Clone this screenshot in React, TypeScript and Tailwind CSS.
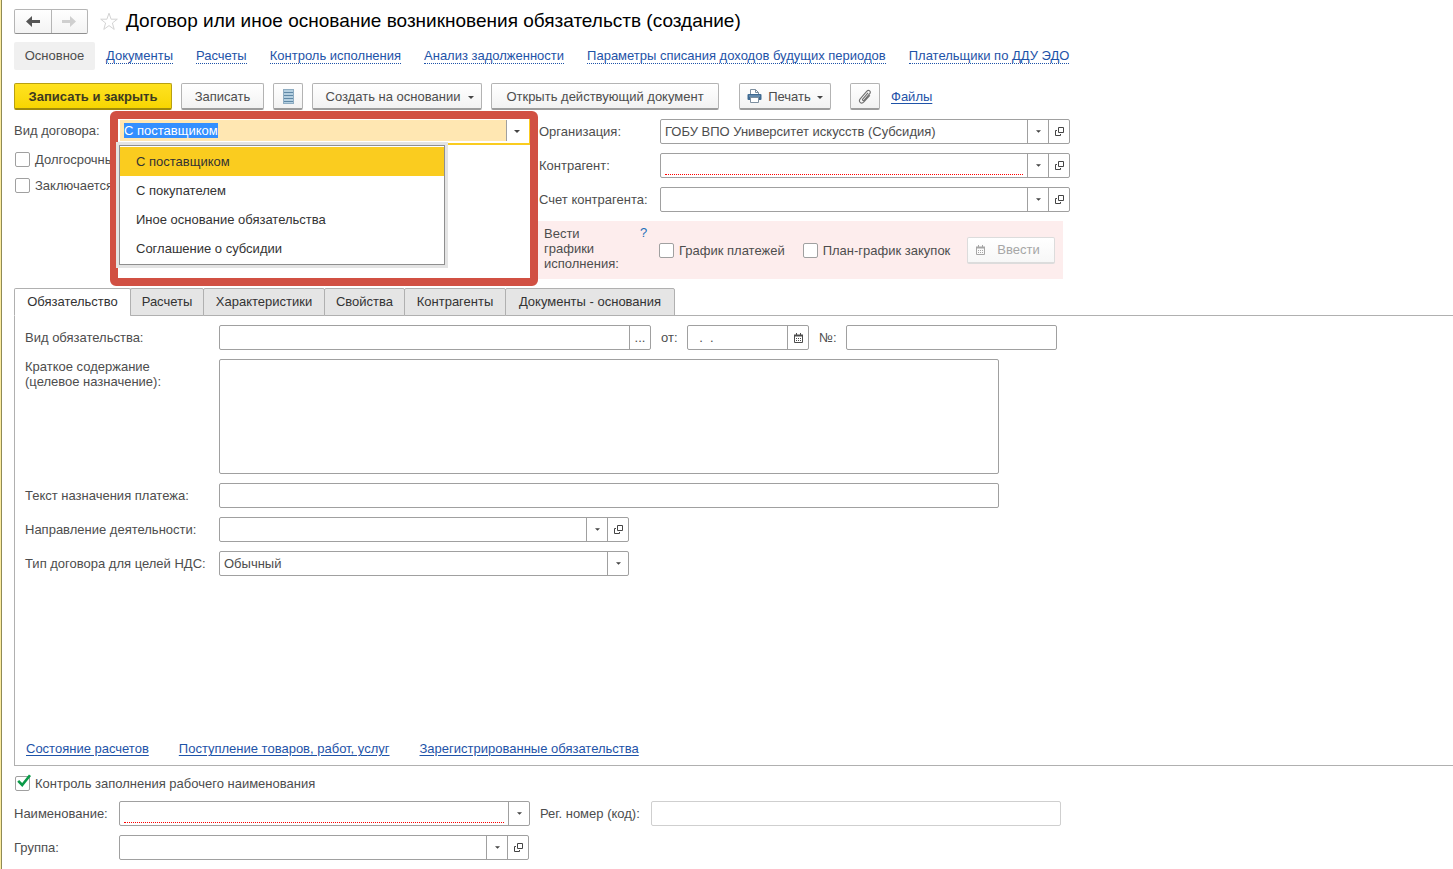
import { useEffect, useRef, useState, type ReactNode } from "react";
import clsx from "clsx";

const sections = ["Документы", "Расчеты", "Контроль исполнения", "Анализ задолженности", "Параметры списания доходов будущих периодов", "Плательщики по ДДУ ЭДО"];
const kinds = ["С поставщиком", "С покупателем", "Иное основание обязательства", "Соглашение о субсидии"];
const tabs = [
  { name: "Обязательство", width: "w-[117px]" },
  { name: "Расчеты", width: "w-[74px]" },
  { name: "Характеристики", width: "w-[122px]" },
  { name: "Свойства", width: "w-[81px]" },
  { name: "Контрагенты", width: "w-[102px]" },
  { name: "Документы - основания", width: "w-[170px]" },
];
const reports = ["Состояние расчетов", "Поступление товаров, работ, услуг", "Зарегистрированные обязательства"];

export default function App() {
  return (
    <div className="flex min-h-screen flex-col border-l border-[#fbeb9e] bg-white font-['Liberation_Sans',Arial,sans-serif] text-[13px] leading-[15px] text-[#4d4d4d]">
      <div className="flex flex-1 flex-col border-l border-[#8f8a55] py-[9px] pl-3">
        <Header />
        <SectionNav />
        <Toolbar />
        <MainFields />
        <Tabs />
        <Footer />
      </div>
    </div>
  );
}

function Header() {
  return (
    <header className="flex h-6 items-center">
      <div className="flex h-[25px] w-[74px] shrink-0 rounded-xs border border-[#b5b5b5] border-b-[#8f8f8f] bg-linear-to-b from-white to-[#f3f3f3]">
        <button type="button" aria-label="Назад" className="flex flex-1 items-center justify-center border-r border-[#b5b5b5]">
          <ArrowIcon className="text-[#555]" />
        </button>
        <button type="button" aria-label="Вперед" disabled className="flex flex-1 items-center justify-center">
          <ArrowIcon className="rotate-180 text-[#cfcfcf]" />
        </button>
      </div>
      <button type="button" aria-label="В избранное" className="ml-3">
        <svg width="18" height="19" viewBox="0 0 18 19" fill="none" stroke="#d3d3d3">
          <path d="M9 1.2 11.1 7.2H17.3L12.4 11 14.2 17.4 9 13.6 3.8 17.4 5.6 11 .7 7.2H6.9Z" />
        </svg>
      </button>
      <h1 className="ml-2 text-[19px] leading-6 text-black">Договор или иное основание возникновения обязательств (создание)</h1>
    </header>
  );
}

function SectionNav() {
  return (
    <nav className="mt-[9px] flex h-7 items-center gap-[23px]">
      <a href="#main" className="-mr-3 flex h-7 w-[81px] items-center justify-center rounded-xs bg-[#f0f0f0] pb-px">Основное</a>
      {sections.map(s => (
        <a key={s} href="#section" className="border-b border-dotted border-[#1e53a8] text-[#1e53a8]">{s}</a>
      ))}
    </nav>
  );
}

const buttonBase = "flex h-[27px] items-center justify-center rounded-xs border border-[#b3b3b3] border-b-2 border-b-[#9c9c9c] bg-linear-to-b from-white to-[#f2f2f2]";

function Toolbar() {
  return (
    <div className="mt-[13px] flex items-center gap-[9px]">
      <button type="button" className="flex h-[27px] w-[158px] items-center justify-center rounded-xs border border-b-2 border-[#b8a012] border-b-[#a08b0c] bg-linear-to-b from-[#ffe21f] to-[#f7d600] font-bold text-[#3d3a20]">Записать и закрыть</button>
      <button type="button" className={clsx(buttonBase, "w-[83px]")}>Записать</button>
      <button type="button" aria-label="Список" className={clsx(buttonBase, "w-[30px]")}><ListIcon /></button>
      <button type="button" className={clsx(buttonBase, "w-[170px] gap-2 pl-1.5")}>Создать на основании<Caret /></button>
      <button type="button" className={clsx(buttonBase, "w-[228px]")}>Открыть действующий документ</button>
      <button type="button" className={clsx(buttonBase, "ml-[11px] w-[92px] gap-1.5")}><PrinterIcon />Печать<Caret /></button>
      <button type="button" aria-label="Присоединенные файлы" className={clsx(buttonBase, "ml-2.5 w-[30px]")}><ClipIcon /></button>
      <a href="#files" className="ml-0.5 text-[#1e53a8] underline underline-offset-2">Файлы</a>
    </div>
  );
}

function MainFields() {
  return (
    <div className="mt-[9px] flex">
      <div className="relative w-[525px] shrink-0">
        {/* callout around the drop-down */}
        <div className="absolute -top-2 left-24 z-10 h-[175px] w-[428px] rounded-md border-8 border-[#d15043] bg-white" />
        <KindCombo />
        <div className="mt-2 flex flex-col gap-[11px]">
          <Check label="Долгосрочный" />
          <Check label="Заключается" />
        </div>
      </div>
      <div className="w-[531px]">
        <div className="flex flex-col gap-[9px]">
          <Row id="org" label="Организация:" labelClass="w-[121px]">
            <SelectField id="org" value="ГОБУ ВПО Университет искусств (Субсидия)" open className="w-[410px]" />
          </Row>
          <Row id="partner" label="Контрагент:" labelClass="w-[121px]">
            <SelectField id="partner" required open className="w-[410px]" />
          </Row>
          <Row id="account" label="Счет контрагента:" labelClass="w-[121px]">
            <SelectField id="account" open className="w-[410px]" />
          </Row>
        </div>
        <div className="mt-[9px] mr-[7px] -ml-1 flex h-[58px] bg-[#fdeded] pt-1 pl-[9px]">
          <p className="mr-4 w-20 pt-px">Вести графики исполнения:</p>
          <a href="#help" className="w-[18px] text-[#1e6fb8]">?</a>
          <div className="flex h-[50px] items-center gap-[17px]">
            <Check label="График платежей" />
            <Check label="План-график закупок" />
            <button type="button" disabled className="flex h-[27px] w-[88px] items-center rounded-xs border border-b-2 border-[#dcdcdc] bg-linear-to-b from-white to-[#f7f7f7] pl-2 text-[#a6a6a6]">
              <CalendarIcon />
              <span className="ml-3">Ввести</span>
            </button>
          </div>
        </div>
      </div>
    </div>
  );
}

function KindCombo() {
  const ref = useRef<HTMLInputElement>(null);
  const [value, setValue] = useState(kinds[0]);

  useEffect(() => {
    ref.current?.focus();
    ref.current?.select();
  }, []);

  return (
    <div className="flex h-[25px] items-center">
      <label htmlFor="kind" className="w-[105px] shrink-0 pb-0.5">Вид договора:</label>
      <div className="relative z-20 flex h-[26px] w-[411px] border-r border-b-2 border-[#facc1f] bg-white pt-px">
        <input
          ref={ref}
          id="kind"
          role="combobox"
          aria-expanded="true"
          aria-controls="kind-list"
          value={value}
          onChange={e => setValue(e.target.value)}
          className="mb-0.5 ml-px min-w-0 flex-1 bg-[#ffe7b2] pl-1 text-[#4d4d4d] outline-none selection:bg-[#338fff] selection:text-white"
        />
        <button type="button" aria-label="Выбрать" className="mb-0.5 flex w-[23px] items-center border-l border-[#a0a0a0] pl-[7px]"><Caret /></button>
        <ul id="kind-list" role="listbox" className="absolute top-[26px] left-0 w-[326px] border border-[#8f8f8f] bg-white py-px text-[#333] shadow-[0_0_0_3px_#e4e4e4]">
          {kinds.map(k => (
            <li key={k} role="option" aria-selected={k === value} onClick={() => setValue(k)} className={clsx("flex h-[29px] items-center pl-4", k === value && "bg-[#facc1f]")}>{k}</li>
          ))}
        </ul>
      </div>
    </div>
  );
}

function Tabs() {
  const [active, setActive] = useState(tabs[0].name);
  return (
    <section className="mt-[9px] flex flex-1 flex-col">
      <div role="tablist" className="flex">
        {tabs.map(t => (
          <button
            key={t.name}
            type="button"
            role="tab"
            aria-selected={t.name === active}
            onClick={() => setActive(t.name)}
            className={clsx("-mr-px h-7 rounded-t-xs border border-[#b0b0b0] pb-0.5 whitespace-nowrap text-[#333]", t.width, t.name === active ? "border-b-white bg-white" : "bg-[#e5e5e5]")}
          >
            {t.name}
          </button>
        ))}
        <div className="flex-1 border-b border-[#b0b0b0]" />
      </div>
      <div role="tabpanel" className="flex flex-1 flex-col border-b border-l border-[#b0b0b0] pt-[9px] pl-2.5">
        <div className="flex flex-col gap-[9px]">
          <div className="flex items-center">
            <Row id="duty" label="Вид обязательства:" labelClass="w-[194px]">
              <Field id="duty" className="w-[432px]"><CellButton label="Выбрать">...</CellButton></Field>
            </Row>
            <Row id="date" label="от:" labelClass="ml-2.5 w-[26px]">
              <Field id="date" value="  .  ." className="w-[122px]" inputClass="whitespace-pre"><CellButton label="Календарь"><CalendarIcon /></CellButton></Field>
            </Row>
            <Row id="number" label="№:" labelClass="ml-2.5 w-[27px]">
              <Field id="number" className="w-[211px]" />
            </Row>
          </div>
          <div className="flex">
            <label htmlFor="summary" className="w-[194px] shrink-0">Краткое содержание<br />(целевое назначение):</label>
            <textarea id="summary" className="h-[115px] w-[780px] resize-none rounded-xs border border-[#a0a0a0] px-1 py-1 outline-none" />
          </div>
          <Row id="purpose" label="Текст назначения платежа:" labelClass="w-[194px]">
            <Field id="purpose" className="w-[780px]" />
          </Row>
          <Row id="direction" label="Направление деятельности:" labelClass="w-[194px]">
            <SelectField id="direction" open className="w-[410px]" />
          </Row>
          <Row id="vat" label="Тип договора для целей НДС:" labelClass="w-[194px]">
            <SelectField id="vat" value="Обычный" className="w-[410px]" />
          </Row>
        </div>
        <div className="mt-auto flex gap-[30px] pb-[9px] pl-px">
          {reports.map(r => (
            <a key={r} href="#report" className="text-[#1e53a8] underline underline-offset-2">{r}</a>
          ))}
        </div>
      </div>
    </section>
  );
}

function Footer() {
  return (
    <footer className="mt-2.5">
      <Check label="Контроль заполнения рабочего наименования" defaultChecked />
      <div className="mt-2.5 flex flex-col gap-[9px]">
        <div className="flex items-center">
          <Row id="name" label="Наименование:" labelClass="w-[105px]">
            <SelectField id="name" required className="w-[411px]" />
          </Row>
          <Row id="code" label="Рег. номер (код):" labelClass="ml-2.5 w-[111px]">
            <Field id="code" readOnly className="w-[410px]" />
          </Row>
        </div>
        <Row id="group" label="Группа:" labelClass="w-[105px]">
          <SelectField id="group" open className="w-[410px]" />
        </Row>
      </div>
    </footer>
  );
}

function Row({ id, label, labelClass, children }: { id: string; label: string; labelClass: string; children: ReactNode }) {
  return (
    <div className="flex h-[25px] items-center">
      <label htmlFor={id} className={clsx("shrink-0", labelClass)}>{label}</label>
      {children}
    </div>
  );
}

function Field({ id, value = "", readOnly, className, inputClass, children }: { id: string; value?: string; readOnly?: boolean; className: string; inputClass?: string; children?: ReactNode }) {
  return (
    <div className={clsx("flex h-[25px] rounded-xs border bg-white", readOnly ? "border-[#cfcfcf]" : "border-[#a0a0a0]", className)}>
      <input id={id} type="text" defaultValue={value} readOnly={readOnly} className={clsx("min-w-0 flex-1 px-1 outline-none", inputClass)} />
      {children}
    </div>
  );
}

function SelectField({ id, value = "", required, open, className }: { id: string; value?: string; required?: boolean; open?: boolean; className: string }) {
  return (
    <div className={clsx("flex h-[25px] rounded-xs border border-[#a0a0a0] bg-white", className)}>
      <div className="grid min-w-0 flex-1">
        <select id={id} defaultValue={value} className="col-start-1 row-start-1 min-w-0 appearance-none pr-6 pl-1 outline-none">
          <option value={value}>{value}</option>
        </select>
        {required && <span className="pointer-events-none col-start-1 row-start-1 mr-[25px] mb-0.5 ml-1 self-end border-b border-dotted border-[#ff0000]" />}
        <span className="pointer-events-none col-start-1 row-start-1 flex w-[21px] items-center justify-center justify-self-end border-l border-[#a0a0a0]"><Caret small /></span>
      </div>
      {open && <CellButton label="Открыть"><OpenIcon /></CellButton>}
    </div>
  );
}

function CellButton({ label, children }: { label: string; children: ReactNode }) {
  return <button type="button" aria-label={label} className="flex w-[21px] shrink-0 items-center justify-center border-l border-[#a0a0a0]">{children}</button>;
}

function Check({ label, defaultChecked }: { label: string; defaultChecked?: boolean }) {
  return (
    <label className="flex h-[15px] items-center gap-[5px] whitespace-nowrap">
      <span className="grid">
        <input type="checkbox" defaultChecked={defaultChecked} className="peer col-start-1 row-start-1 ml-px size-[15px] appearance-none rounded-xs border border-[#a0a0a0] bg-white" />
        <svg width="15" height="16" viewBox="0 0 15 16" fill="none" stroke="#0a9a48" strokeWidth="2.6" className="pointer-events-none invisible col-start-1 row-start-1 -mt-0.5 ml-px overflow-visible peer-checked:visible">
          <path d="M3.2 6.8 7.2 11 15 1.2" />
        </svg>
      </span>
      {label}
    </label>
  );
}

function Caret({ small }: { small?: boolean }) {
  return (
    <svg width={small ? 5 : 6} height="3" viewBox="0 0 6 3" fill="#444" className={clsx("shrink-0", !small && "mt-0.5")}>
      <path d="M0 0H6L3 3Z" />
    </svg>
  );
}

function ArrowIcon({ className }: { className: string }) {
  return (
    <svg width="14" height="11" viewBox="0 0 14 11" className={className}>
      <path d="M14 4H6V0L0 5.5 6 11V7H14Z" fill="currentColor" />
    </svg>
  );
}

function ListIcon() {
  return (
    <svg width="11" height="15" viewBox="0 0 11 15">
      <rect x=".5" y=".5" width="10" height="14" fill="#b4cfe0" stroke="#8fadc2" />
      <path d="M1 3.5H10M1 6.5H10M1 9.5H10M1 12.5H10" stroke="#5f88a6" />
    </svg>
  );
}

function PrinterIcon() {
  return (
    <svg width="15" height="14" viewBox="0 0 15 14">
      <path d="M3.5 5V.5H8.5L11.5 3.5V5" fill="#fff" stroke="#7d8f9f" />
      <path d="M8.5.5V3.5H11.5" fill="none" stroke="#7d8f9f" />
      <rect x=".5" y="5" width="14" height="6" rx="1" fill="#3e6a92" />
      <path d="M2 7H13" stroke="#88a9c6" />
      <path d="M3.5 8.5H11.5V13.5H3.5Z" fill="#fff" stroke="#7d8f9f" />
    </svg>
  );
}

function ClipIcon() {
  return (
    <svg width="14" height="15" viewBox="0 0 14 15" fill="none" stroke="#707070" strokeWidth="1.1" strokeLinecap="round">
      <path d="M9.8 4.2 4.7 10.2C4 11.1 5.2 12.1 6 11.3L11.7 4.7C13.4 2.6 10.8.2 8.9 2.2L2.4 9.6C-.2 12.6 3.3 15.6 5.9 12.9L11.6 6.6" />
    </svg>
  );
}

function OpenIcon() {
  return (
    <svg width="9" height="9" viewBox="0 0 9 9" fill="none" stroke="#444">
      <path d="M3.5.5H8.5V5.5H3.5ZM2 3.5H.5V8.5H5.5V7" />
    </svg>
  );
}

function CalendarIcon() {
  return (
    <svg width="9" height="10" viewBox="0 0 9 10" fill="none" stroke="currentColor">
      <path d="M.5 2.5H8.5V9.5H.5Z" />
      <path d="M0 2.5H9" strokeWidth="2" />
      <path d="M2.5 0V2M6.5 0V2" />
      <path d="M2 5.5H7M2 7.5H7" strokeDasharray="1 1" />
    </svg>
  );
}
